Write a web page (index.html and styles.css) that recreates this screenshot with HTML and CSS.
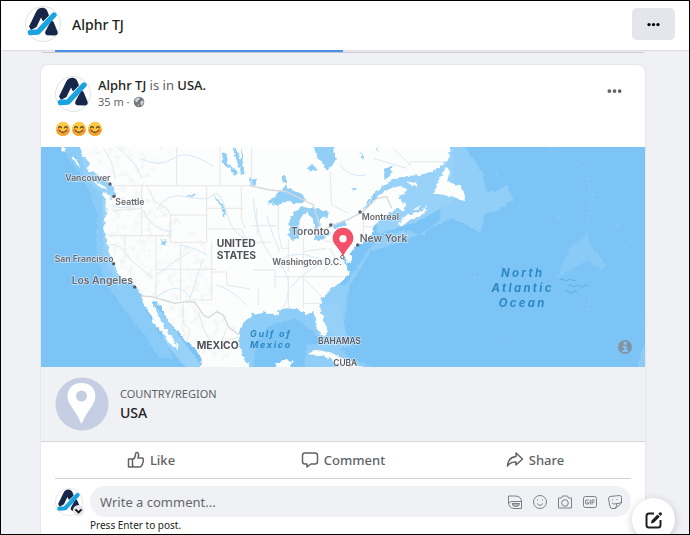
FILE: index.html
```html
<!DOCTYPE html>
<html lang="en">
<head>
<meta charset="utf-8">
<meta name="viewport" content="width=device-width, initial-scale=1">
<title>Alphr TJ</title>
<link rel="stylesheet" href="styles.css">
</head>
<body>
<svg class="sprite" aria-hidden="true">
  <symbol id="logo" viewBox="0 0 36 36">
    <circle cx="18" cy="18" r="17.500" fill="#fff" stroke="#dfe1e5"/>
    <path d="M4 20.500 11 6Q13 1.800 17.500 1.800Q21 1.800 22.500 5.500L24 9.500L18 15.500L16 11.500L11.500 21L6 24Z" fill="#17274a"/>
    <path d="M26 15Q27.800 14 28.800 16.500L32.500 25.500Q33.500 29 30 29.500L22 29.300Q19 28 20.800 24.500Z" fill="#17274a"/>
    <path d="M5.500 26.500 13 26 29 9" fill="none" stroke="#1ba3df" stroke-width="5.400" stroke-linecap="round" stroke-linejoin="round"/>
  </symbol>
  <symbol id="dots" viewBox="0 0 16 6">
    <circle cx="2.500" cy="3" r="2"/><circle cx="8" cy="3" r="2"/><circle cx="13.500" cy="3" r="2"/>
  </symbol>
  <symbol id="smile" viewBox="0 0 16 16">
    <circle cx="8" cy="8" r="7.200" fill="#fdc843"/>
    <path d="M1.200 10a7.200 7.200 0 0 0 13.600 0Q8 14 1.200 10Z" fill="#f6a12c"/>
    <circle cx="3.500" cy="9.300" r="1.800" fill="#f88b3b"/><circle cx="12.500" cy="9.300" r="1.800" fill="#f88b3b"/>
    <path d="M3.500 6.800Q5 4.500 6.500 6.800M9.500 6.800Q11 4.500 12.500 6.800M4.500 9.700Q8 13.200 11.500 9.700" fill="none" stroke="#5d3f25" stroke-width="1.200" stroke-linecap="round"/>
  </symbol>
</svg>

<div class="page">
  <header class="topbar">
    <a class="profile" href="#"><svg class="avatar"><use href="#logo"/></svg><span>Alphr TJ</span></a>
    <button class="more" aria-label="More options"><svg><use href="#dots"/></svg></button>
  </header>

  <main class="feed">
    <div class="tabs"></div>
    <article class="post">
      <div class="post-head">
        <svg class="avatar"><use href="#logo"/></svg>
        <div class="byline">
          <p class="author"><strong>Alphr TJ</strong> is in <strong>USA.</strong></p>
          <p class="when">35 m ·
            <svg viewBox="0 0 12 12"><circle cx="6" cy="6" r="5.300" fill="#74787e"/><path d="M2 3.500Q4 1.300 6.500 1.500L7 3 5.200 4.200 4.500 6 2.800 6.200ZM7.500 5.500 10 4.300 10.800 6.500 9 9.500 7.500 8.500ZM4.500 8 6 8.800 5.500 10.500Z" fill="#cfd2d6"/></svg></p>
        </div>
        <button class="dots" aria-label="Post options"><svg><use href="#dots"/></svg></button>
      </div>
      <div class="message" role="img" aria-label="Three smiling faces">
        <svg><use href="#smile"/></svg><svg><use href="#smile"/></svg><svg><use href="#smile"/></svg>
      </div>

      <svg class="map" viewBox="3 6 1812 660" role="img" aria-label="Map of the United States">
        <defs>
          <filter id="rough" x="-5%" y="-5%" width="110%" height="110%" color-interpolation-filters="sRGB"><feTurbulence type="fractalNoise" baseFrequency=".09" numOctaves="2" seed="4" result="n"/><feDisplacementMap in="SourceGraphic" in2="n" scale="14" xChannelSelector="R" yChannelSelector="G"/></filter>
          <filter id="relief" x="0" y="0" width="100%" height="100%" color-interpolation-filters="sRGB"><feTurbulence type="fractalNoise" baseFrequency=".05" numOctaves="4" seed="9"/><feColorMatrix values="0 0 0 0 .9  0 0 0 0 .9  0 0 0 0 .9  2.4 0 0 0 -1.2"/><feComposite in2="SourceGraphic" operator="in"/></filter>
        </defs>
        <rect width="1820" height="680" fill="#7cc4f6"/>
        <g class="shelf" filter="url(#rough)">
          <path d="M60 0H320V500L400 640H360L300 555 245 485 190 395 170 320 172 210 145 130 100 60Z" opacity=".55"/>
          <path d="M120 0H240V440L190 330 187 150 135 95Z"/>
          <path d="M330 460 500 680H450L380 600 340 520Z"/>
          <path d="M575 480H900L925 590 905 610 850 600 820 560 770 520 690 540 650 590 640 670H575Z" opacity=".65"/>
          <path d="M800 420H920L930 400 990 305 1030 275 1090 255 1150 270 1200 225 1205 0H1270L1330 85 1335 135 1365 140 1400 120 1420 165 1370 198 1335 205 1320 265 1280 240 1235 220 1100 285 990 320 925 430 910 560 940 610 890 600Z" opacity=".75"/>
          <path d="M1000 90 1240 10 1240 170 1130 230 1010 270Z"/>
          <path d="M800 600 880 590 930 640 1010 670H790Z" opacity=".7"/>
          <path d="M1640 250 1650 300 1665 320 1700 355 1690 375 1640 345 1550 400 1570 350 1595 300 1630 280Z" opacity=".45"/>
          <path d="M1815 590 1790 666H1820Z" opacity=".6"/>
        </g>
        <g class="banks">
          <path d="M1530 12 1550 22M1600 45 1630 70M1642 100 1652 120 1645 135 1660 150 1652 175 1650 205 1640 230M1320 400 1290 395M1645 450 1652 475 1640 505M1805 520 1808 540M1450 212h18M1553 216h10M1370 85v6M1730 240h8M1380 580h6M1770 287h6"/>
        </g>
        <g class="land" filter="url(#rough)">
          <path d="M118 0 128 30 150 55 140 75 165 85 190 100 210 115 222 128 226 150 215 168 210 148 188 141 196 165 200 195 194 230 192 262 202 290 206 320 216 345 226 362 232 385 248 405 275 417 292 430 302 450 312 478 326 502 342 520 336 532 352 547 368 562 385 592 412 613 416 606 400 585 385 565 370 537 355 512 345 490 334 465 352 472 370 500 385 530 420 565 440 590 470 615 486 640 480 680H640L612 640 598 600 597 560 606 537 640 506 672 501 700 510 718 507 708 495 740 490 776 493 796 508 820 498 826 525 830 550 845 573 858 574 862 555 850 520 840 490 845 460 875 430 905 410 926 390 920 365 908 345 912 330 918 358 927 338 935 318 948 303 975 290 995 270 1000 245 1020 225 1050 205 1072 190 1092 200 1098 180 1075 158 1100 140 1100 126 1070 122 1030 140 1000 165 966 200 1000 150 1040 115 1080 95 1140 90 1190 75 1215 50 1226 25 1228 0Z"/>
          <path d="M1075 235 1100 210 1145 200 1160 175 1155 205 1115 225 1080 242ZM1182 150 1195 105 1218 68 1228 75 1222 110 1262 122 1276 165 1262 166 1240 155 1205 148ZM1100 108 1135 118 1128 124 1105 116ZM1120 190 1140 185 1135 193ZM160 106 195 125 203 136 180 125ZM62 6 80 6 72 22ZM95 35 112 45 118 68 104 55ZM800 628 830 615 870 622 920 645 970 666H900L870 640 835 630ZM707 655 730 645 758 648 750 670H705ZM922 355 930 325 937 335 932 355Z"/>
          <path d="M1190 0H1230L1225 45 1205 60 1190 50Z"/>
        </g>
        <path d="M120 0 224 128 196 165 194 230 226 362 300 440 440 590 486 640 600 660 598 560 530 480 500 300 400 200 330 100 420 0Z" filter="url(#relief)" opacity=".55"/>
        <g class="lake" filter="url(#rough)">
          <path d="M680 170 710 150 735 122 755 132 790 150 795 170 770 176 740 168 715 180 685 176ZM745 275 750 220 765 200 785 185 810 190 782 218 775 250 778 280 755 285ZM808 190 835 190 865 200 863 215 840 218 838 245 825 255 818 220 800 205ZM825 272 875 262 868 272 835 288 822 282ZM870 240 915 228 922 240 888 250ZM820 0H885L880 25 890 45 860 75 842 50 830 35ZM725 95 735 90 740 115 727 110ZM630 100 650 105 645 122 632 125ZM605 6 612 90 600 70ZM545 20 560 30 565 60 590 75 588 96 568 70 550 55ZM578 6 592 15 605 55 615 85 605 90 590 45ZM362 284 380 288 375 302 365 298ZM438 153 455 152 465 145 466 153 445 158ZM518 143 535 165 552 180 558 200 550 222 545 188ZM800 70 820 60 830 72 812 80ZM930 130 950 125 948 138ZM960 20 975 40 968 45ZM1010 6 1015 15 1008 18ZM1032 75 1060 60 1045 100 1033 108Z"/>
        </g>
        <g class="rivers">
          <path d="M190 10Q220 50 225 100M230 6Q280 40 305 95M300 40Q360 70 400 40T520 65M215 180Q260 205 310 160M310 195Q330 250 390 260M350 195Q380 140 440 155T520 150 560 205 630 280M420 300Q470 310 500 330M350 390Q400 350 450 320M345 460Q420 400 450 460L490 340M530 420Q570 430 620 480M200 300Q240 290 270 340M640 160Q650 300 710 350T730 490M710 350Q760 320 800 330T880 360M680 210Q700 280 720 320M750 430Q800 370 860 350M1000 155 966 200 920 228M900 60Q930 100 980 90M1000 40 1100 70"/>
        </g>
        <g class="borders">
          <path d="M220 122H630M410 122V6M540 6V122M305 122V190 270M202 272H392M215 198 305 190M255 272V330L340 402M348 272V460M348 373H530M392 210V292H500M392 210H500M500 122V292M500 190H612M500 252H605L620 292M422 292V470M515 292V465H438M515 381H560V420L630 432M604 122V220L616 252M630 292H695M635 10V122M635 242H710M640 375H705V430M655 430V480M715 180V260L725 310M650 190 652 270M725 310H745M745 285V380M790 283V370M790 320 860 310M705 395H920M745 395V490M790 395V490M790 475H840M855 250V290H945M870 310 885 335 850 380M870 80 875 180 925 205M970 200V290M970 245H1000M320 122 345 170 380 190 392 210M790 400 850 460M1060 10 1110 60V50H1220"/>
          <path class="national" d="M302 453 335 455 405 475 438 470 465 472 490 510 505 518 530 500 550 510 565 545 597 570M630 122 690 135 740 140 820 180 840 245M825 270 870 245 920 225 970 200 1010 160 1040 155 1055 190"/>
          <path d="M430 475V535L450 555 440 590M475 500 490 550 510 590M560 550 545 590 600 575"/>
        </g>
        <g class="cities"><circle cx="210" cy="117" r="5"/><circle cx="222" cy="154" r="5"/><circle cx="221" cy="356" r="5"/><circle cx="284" cy="426" r="5"/><circle cx="872" cy="240" r="5"/><circle cx="960" cy="201" r="5"/><circle cx="953" cy="300" r="5"/><circle class="capital" cx="907" cy="336" r="5"/></g>
        <g class="labels">
          <text x="76" y="109">Vancouver</text><text x="226" y="179">Seattle</text>
          <text x="44" y="350">San Francisco</text><text class="large" x="95" y="418">Los Angeles</text>
          <text class="large" x="753" y="270">Toronto</text><text x="965" y="225">Montreal</text>
          <text class="large" x="959" y="291">New York</text><text x="697" y="360">Washington D.C.</text>
          <text class="country" x="530" y="305">UNITED</text><text class="country" x="530" y="342">STATES</text>
          <text class="country" x="470" y="612">MEXICO</text><text class="island" x="834" y="597">BAHAMAS</text><text class="island" x="880" y="663">CUBA</text>
        </g>
        <g class="water">
          <text x="630" y="577">Gulf of</text><text x="630" y="610">Mexico</text>
          <g class="ocean"><text x="1448" y="397">North</text><text x="1448" y="441">Atlantic</text><text x="1448" y="485">Ocean</text></g>
        </g>
        <path class="waves" d="M1560 405q6-7 12 0t12 0 12 0 12 0M1585 423q6-7 12 0t12 0 12 0 12 0 12 0M1575 441q6-7 12 0t12 0 12 0"/>
        <path d="M909 334Q902 318 888 302A31 31 0 1 1 930 302Q916 318 909 334Z" fill="#f5506a"/><circle cx="909" cy="281" r="11" fill="#fff"/>
        <circle cx="1755" cy="606" r="21" fill="#8493a3"/><path d="M1751 590h9v9h-9zM1748 602h12v13h4v6h-17v-6h5v-7h-4z" fill="#7cc4f6"/>
      </svg>

      <section class="place">
        <svg viewBox="0 0 54 54"><circle cx="27" cy="27" r="26.500" fill="#c5cee2"/><path fill-rule="evenodd" d="M26.500 47Q23 38 16 29C9 19 13 6 26.500 6S44 19 37 29Q30 38 26.500 47ZM26.500 13.500a5.500 5.500 0 1 0 0 11 5.500 5.500 0 0 0 0-11Z" fill="#fff"/></svg>
        <div><p class="kind">COUNTRY/REGION</p><p class="name">USA</p></div>
      </section>

      <div class="actions">
        <button><svg viewBox="0 0 18 18"><path d="M1.500 8H5.500V16H1.500ZM5.500 8.500Q8.500 7 8.500 3.500Q8.500 1.500 10 1.500Q11.800 1.500 11.500 4.500L11 7H15Q17 7.500 16.200 9.500Q16.800 11 15.600 12Q15.800 13.500 14.800 14Q14.500 16 12.500 16H7.500L5.500 15"/></svg>Like</button>
        <button><svg viewBox="0 0 18 18"><path d="M4 2H14Q16.500 2 16.500 4.500V10.500Q16.500 13 14 13H10L6 16V13H4Q1.500 13 1.500 10.500V4.500Q1.500 2 4 2Z"/></svg>Comment</button>
        <button><svg viewBox="0 0 18 18"><path d="M10 2 16.500 8 10 14V11Q4.500 10.500 1.500 15Q2 6.500 10 5.500Z"/></svg>Share</button>
      </div>

      <form class="comment">
        <button type="button" class="identity" aria-label="Choose profile"><svg class="avatar"><use href="#logo"/></svg><svg class="chevron" viewBox="0 0 10 10"><circle cx="5" cy="5" r="5" fill="#e4e6eb"/><path d="M2.200 4 5 6.800 7.800 4" fill="none" stroke="#111" stroke-width="1.700"/></svg></button>
        <div class="field">
          <input type="text" aria-label="Write a comment" placeholder="Write a comment...">
          <button type="button" aria-label="Avatar stickers"><svg viewBox="0 0 16 16"><path d="M1.500 2H8Q14.500 2 14.500 8V14.500H7Q1.500 14 1.500 8ZM1.500 9.500Q2.500 7.500 4.500 7.500H14.500M5 9.500H12.500Q12.500 12.500 9 12.500T5 9.500ZM5.500 11H12"/></svg></button>
          <button type="button" aria-label="Emoji"><svg viewBox="0 0 16 16"><circle cx="8" cy="8" r="6.500"/><path d="M5 9.500Q8 13 11 9.500M5.500 5.500v1M10.500 5.500v1"/></svg></button>
          <button type="button" aria-label="Photo"><svg viewBox="0 0 16 16"><path d="M1.500 4H4.500L5.500 2H10.500L11.500 4H14.500V14H1.500Z"/><circle cx="8" cy="9" r="3.300"/></svg></button>
          <button type="button" aria-label="GIF"><svg viewBox="0 0 16 16"><rect x="1.500" y="2.500" width="13" height="11" rx="2"/><path d="M6.500 6H4Q3.500 6 3.500 8T4 10H6.300V8.300H5M8.200 5.500V10.500M10 10.500V6H12.800M10 8.200H12.500"/></svg></button>
          <button type="button" aria-label="Sticker"><svg viewBox="0 0 16 16"><path d="M3 2.500 12.500 1.500Q14.500 1.500 14.500 3.500V9L8.500 14.500H5Q3.500 14.500 3 12.500L1.500 5Q1.500 3 3 2.500ZM14.500 8Q12.500 10 9.500 9.500Q10 12.500 8 14.500M5.500 5.500v1M10 5v1M5 8.800Q6 11 9.500 9.500"/></svg></button>
        </div>
        <p class="hint">Press Enter to post.</p>
      </form>
    </article>
  </main>
  <button class="compose" aria-label="New message"><svg viewBox="0 0 20 20"><path d="M10 3.500H5Q2.500 3.500 2.500 6V15Q2.500 17.500 5 17.500H14Q16.500 17.500 16.500 15V10" fill="none" stroke="#1c1e21" stroke-width="2"/><path d="M7 13.500 7.500 10.500 13.500 4.500 15.800 6.800 9.800 12.800ZM14.300 3.700 15.500 2.500Q16.500 1.700 17.500 2.700T17.600 4.700L16.500 6Z" fill="#1c1e21"/></svg></button>
</div>
</body>
</html>
```

FILE: styles.css
```css
* { box-sizing: border-box; }
body { margin: 0; font-family: "Noto Sans", "Open Sans", sans-serif; color: #1c1e21; }
p { margin: 0; }
button { border: 0; padding: 0; background: none; font: inherit; color: inherit; }
svg { display: block; flex: none; }
.sprite { position: absolute; width: 0; height: 0; }

.page { height: 100vh; overflow: hidden; border: 1px solid #000; background: #f0f1f5; }
.topbar { display: flex; align-items: center; justify-content: space-between; height: 49px; padding: 0 14px 3px 24px; background: #fff; box-shadow: 0 1px 1px #dcdee2; }
.profile { display: flex; align-items: center; gap: 11px; color: #1c1e21; font-size: 14px; font-weight: 500; text-decoration: none; }
.avatar { width: 36px; height: 36px; }
.more { display: grid; place-items: center; width: 43px; height: 32px; border-radius: 5px; background: #e4e6eb; }
.more svg { width: 13px; height: 5px; }

.feed { margin: 0 44px 0 40px; }
.tabs { position: relative; height: 3px; margin-bottom: 12px; border-radius: 0 0 8px 8px; border-bottom: 1px solid #c9cbd0; }
.tabs::before { content: ""; position: absolute; left: 14px; top: 0; width: 288px; height: 2px; background: #4a90e8; }
.post { border-radius: 7px; background: #fff; box-shadow: 0 0 2px #cfd1d6; }
.post-head { display: flex; align-items: flex-start; gap: 7px; padding: 11px 23px 0 14px; }
.byline { flex: 1; }
.author { font-size: 13px; line-height: 18px; color: #606368; }
.author strong { font-weight: 500; color: #1c1e21; }
.when { display: flex; align-items: center; gap: 3px; font-size: 11px; line-height: 16px; color: #65676b; }
.when svg { width: 12px; height: 12px; }
.dots { margin-top: 12px; fill: #606368; }
.dots svg { width: 15px; height: 6px; }
.message { display: flex; padding: 9px 14px 10px; }
.message svg { width: 16px; height: 16px; }

.map { width: 100%; height: auto; font-family: Inter, Roboto, sans-serif; }
.shelf { fill: #98d2f8; }
.land { fill: #fcfdfd; }
.lake { fill: #91cff7; }
.banks path { fill: none; stroke: #8fcdf7; stroke-width: 5; stroke-dasharray: 6 8; }
.rivers path { fill: none; stroke: #d5eafa; stroke-width: 3; }
.borders path { fill: none; stroke: #e7e7e9; stroke-width: 3; }
.borders .national { stroke: #d8d8da; stroke-width: 4; }
.cities { fill: #5b5c62; }
.cities .capital { fill: #fff; stroke: #5b5c62; stroke-width: 3; }
.labels { fill: #67686d; font-size: 26px; font-weight: 600; stroke: #fff; stroke-opacity: .6; stroke-width: 4; paint-order: stroke; }
.labels .large { font-size: 31px; }
.labels .country { font-size: 31px; font-weight: 700; fill: #505258; }
.labels .island { font-size: 25px; fill: #56585e; }
.water { fill: #2d88c4; font-size: 27px; font-weight: 700; font-style: italic; letter-spacing: 5px; }
.ocean { font-size: 34px; letter-spacing: 7px; text-anchor: middle; }
.waves { fill: none; stroke: #5cacdf; stroke-width: 3; }

.place { display: flex; align-items: center; gap: 11px; height: 75px; padding: 0 14px; background: #f0f1f5; border-bottom: 1px solid #d4d6da; }
.place svg { width: 54px; height: 54px; }
.kind { font-size: 11px; line-height: 18px; color: #606368; }
.name { font-size: 14px; line-height: 20px; font-weight: 500; }
.actions { display: grid; grid-template-columns: repeat(3, 1fr); height: 37px; margin: 0 14px; border-bottom: 1px solid #cfd1d6; }
.actions button { display: flex; align-items: center; justify-content: center; gap: 5px; color: #606368; font-size: 13px; font-weight: 500; }
.actions svg { width: 18px; height: 18px; fill: none; stroke: currentColor; stroke-width: 1.5px; stroke-linejoin: round; }
.comment { display: grid; grid-template-columns: 28px 1fr; column-gap: 7px; align-items: center; padding: 7px 14px 12px; }
.identity { position: relative; }
.identity .avatar { width: 28px; height: 28px; }
.chevron { position: absolute; right: -1px; bottom: 0; width: 11px; height: 11px; }
.field { display: flex; align-items: center; gap: 9px; height: 31px; padding: 0 8px 0 10px; border-radius: 16px; background: #f0f1f5; }
.field input { flex: 1; min-width: 0; border: 0; padding: 0; background: none; font: 13px "Noto Sans", "Open Sans", sans-serif; }
.field input::placeholder { color: #65676b; }
.field svg { width: 16px; height: 16px; fill: none; stroke: #7d8086; stroke-width: 1px; stroke-linejoin: round; }
.hint { grid-column: 2; font-size: 10px; line-height: 16px; }
.compose { position: fixed; right: 15px; bottom: -6px; display: grid; place-items: center; width: 43px; height: 43px; border-radius: 50%; background: #fff; box-shadow: 0 2px 8px #0003; clip-path: inset(-10px -10px 7px -10px); }
.compose svg { width: 20px; height: 20px; }
```
